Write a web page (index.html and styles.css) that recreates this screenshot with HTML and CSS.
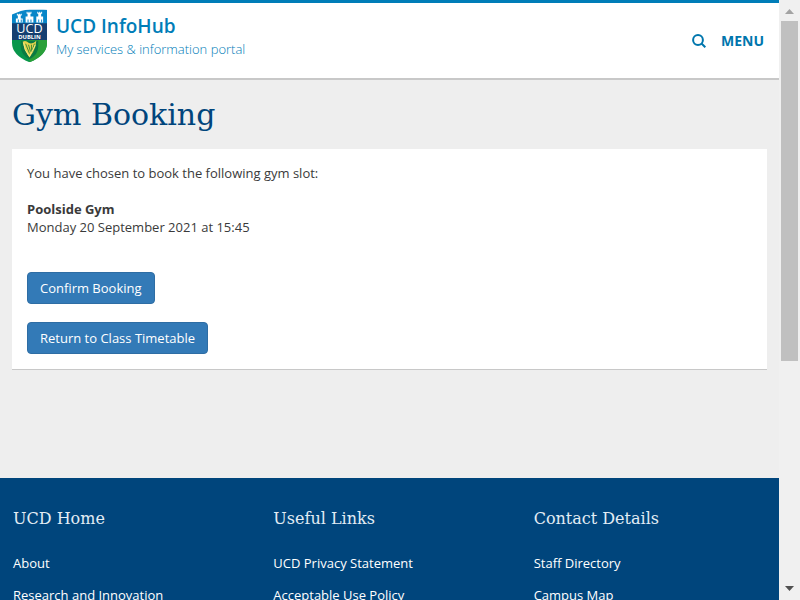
FILE: index.html
```html
<!DOCTYPE html>
<html lang="en">
<head>
<meta charset="utf-8">
<meta name="viewport" content="width=device-width, initial-scale=1">
<title>Gym Booking - UCD InfoHub</title>
<link rel="stylesheet" href="styles.css">
</head>
<body>
<div class="page">
  <header class="site-header">
    <a class="brand" href="#">
      <svg class="crest" viewBox="0 0 36 54" aria-hidden="true">
        <defs><clipPath id="shield"><path d="M0 5Q18-4 36 0V34Q36 47 18 54Q0 47 0 34Z"/></clipPath></defs>
        <g clip-path="url(#shield)">
          <path fill="#0786c8" d="M0 0H36V15H0Z"/>
          <path fill="#153f70" d="M0 14H36V32H0Z"/>
          <path fill="#08964b" d="M0 31H36V54H0Z"/>
          <path fill="#2a9f39" d="M18 31H36V54H18Z"/>
          <path fill="#fff" d="M4 13V9H6V6H5V4H6V5H7V4H8V5H9V4H10V6H9V9H11V13ZM14 13V7H16V4H15V2H16V3H17V2H18V3H19V2H20V4H19V7H22V13ZM25 13V7H27V4H26V2H27V3H28V2H29V3H30V2H31V4H30V7H32V13Z"/>
          <path fill="#0786c8" d="M6 10H7V13H6ZM9 10H10V13H9ZM16 10H17V13H16ZM19 10H20V13H19ZM27 10H28V13H27ZM30 10H31V13H30Z"/>
          <path fill="#0b7a43" d="M9 32H27V38Q27 46 18 51Q9 46 9 38Z"/>
          <path fill="#e4d34c" d="M11 33Q14 31 17 34Q21 36 25 32L24 38Q22 44 18 49Q13 43 11 33Z"/>
          <path fill="none" stroke="#3c8b36" d="M14 35L18 45M17 36L19 43M20 36V42M23 35L20 44"/>
          <path fill="none" stroke="#f3e984" d="M12 34Q12 41 18 48L24 36"/>
        </g>
        <text class="crest-name" x="18" y="24" text-anchor="middle">UCD</text>
        <text class="crest-city" x="18" y="30" text-anchor="middle">DUBLIN</text>
      </svg>
      <span class="brand-text">
        <span class="brand-title">UCD InfoHub</span>
        <span class="brand-tagline">My services &amp; information portal</span>
      </span>
    </a>
    <nav class="tools" aria-label="Site">
      <button class="tool" type="button" aria-label="Search">
        <svg class="search-icon" viewBox="0 0 14 14" aria-hidden="true"><circle cx="6" cy="6" r="4.900"/><path d="M9.500 9.500L13.300 13.300"/></svg>
      </button>
      <button class="tool" type="button">MENU</button>
    </nav>
  </header>
  <main class="content">
    <h1>Gym Booking</h1>
    <section class="card">
      <p>You have chosen to book the following gym slot:</p>
      <p><strong>Poolside Gym</strong><br>Monday 20 September 2021 at 15:45</p>
      <div class="actions">
        <button class="btn" type="button">Confirm Booking</button>
        <button class="btn" type="button">Return to Class Timetable</button>
      </div>
    </section>
  </main>
  <footer class="site-footer">
    <section>
      <h2>UCD Home</h2>
      <ul><li><a href="#">About</a></li><li><a href="#">Research and Innovation</a></li></ul>
    </section>
    <section>
      <h2>Useful Links</h2>
      <ul><li><a href="#">UCD Privacy Statement</a></li><li><a href="#">Acceptable Use Policy</a></li></ul>
    </section>
    <section>
      <h2>Contact Details</h2>
      <ul><li><a href="#">Staff Directory</a></li><li><a href="#">Campus Map</a></li></ul>
    </section>
  </footer>
</div>
<div class="scrollbar" aria-hidden="true">
  <svg class="arrow arrow-up" viewBox="0 0 9 5"><path d="M0 5L4.500 0L9 5Z"/></svg>
  <div class="track"><div class="thumb"></div></div>
  <svg class="arrow arrow-down" viewBox="0 0 9 5"><path d="M0 0L4.500 5L9 0Z"/></svg>
</div>
</body>
</html>
```
FILE: styles.css
```css
* { box-sizing: border-box; }

body {
  display: grid;
  grid-template-columns: minmax(0, 1fr) 21px;
  height: 100vh;
  margin: 0;
  overflow: hidden;
  background: #eee;
  color: #3a3a3a;
  font: 13px/18px "Open Sans", sans-serif;
}

.page {
  display: flex;
  flex-direction: column;
  height: 100vh;
  overflow: hidden;
}

.site-header {
  display: flex;
  flex-shrink: 0;
  align-items: flex-start;
  justify-content: space-between;
  padding: 6px 15px 15px 12px;
  border-top: 3px solid #007db8;
  border-bottom: 2px solid #c8c8c8;
  background: #fff;
}

.brand {
  display: flex;
  gap: 9px;
  color: #007db8;
  text-decoration: none;
}

.crest { width: 35px; height: 54px; }
.crest text { fill: #fff; }
.crest-name { font: 500 13px "Open Sans", sans-serif; }
.crest-city { font: bold 6px "Open Sans", sans-serif; }

.brand-text { display: flex; flex-direction: column; padding-top: 4px; }
.brand-title { font-size: 19px; font-weight: 600; line-height: 26px; }
.brand-tagline { font-size: 13px; font-weight: 300; line-height: 20px; }

.tools { display: flex; align-items: center; gap: 15px; padding-top: 22px; }

.tool {
  display: flex;
  padding: 0;
  border: 0;
  background: none;
  color: #0076ad;
  font: bold 14px/20px "Open Sans", sans-serif;
}

.search-icon {
  width: 14px;
  height: 14px;
  fill: none;
  stroke: currentColor;
  stroke-width: 2;
}

.content { flex: 1 0 398px; padding: 16px 12px; }

h1, h2 {
  margin: 0;
  font-family: "Roboto Slab", "DejaVu Serif", serif;
  font-weight: 300;
}

h1 { margin-bottom: 15px; color: #00457c; font-size: 30px; line-height: 38px; }

.card {
  padding: 15px;
  border-bottom: 1px solid #c8c8c8;
  background: #fff;
}

p { margin: 0 0 18px; }

.actions {
  display: flex;
  flex-direction: column;
  align-items: flex-start;
  gap: 18px;
  padding-top: 18px;
}

.btn {
  padding: 6px 12px;
  border: 1px solid #2e6da4;
  border-radius: 4px;
  background: #337ab7;
  color: #fff;
  font: 500 13px/18px "Open Sans", sans-serif;
}

.site-footer {
  display: grid;
  flex-shrink: 0;
  grid-template-columns: repeat(3, 1fr);
  gap: 15px;
  padding: 29px 0 0 13px;
  background: #00457c;
  color: #e3edf5;
}

h2 { margin-bottom: 20px; font-size: 16px; line-height: 24px; }

ul {
  display: grid;
  gap: 8px;
  margin: 0;
  padding: 0;
  list-style: none;
  line-height: 24px;
}

ul a { color: #fff; font-weight: 500; text-decoration: none; }

.scrollbar {
  display: flex;
  flex-direction: column;
  align-items: center;
  padding: 9px 2px;
  background: #f0f0f0;
}

.arrow { width: 9px; height: 5px; }
.arrow-up { fill: #a3a3a3; }
.arrow-down { fill: #505050; }
.track { flex: 1; width: 17px; padding: 7px 0; }
.thumb { height: 61%; background: #c0c0c0; }
```
